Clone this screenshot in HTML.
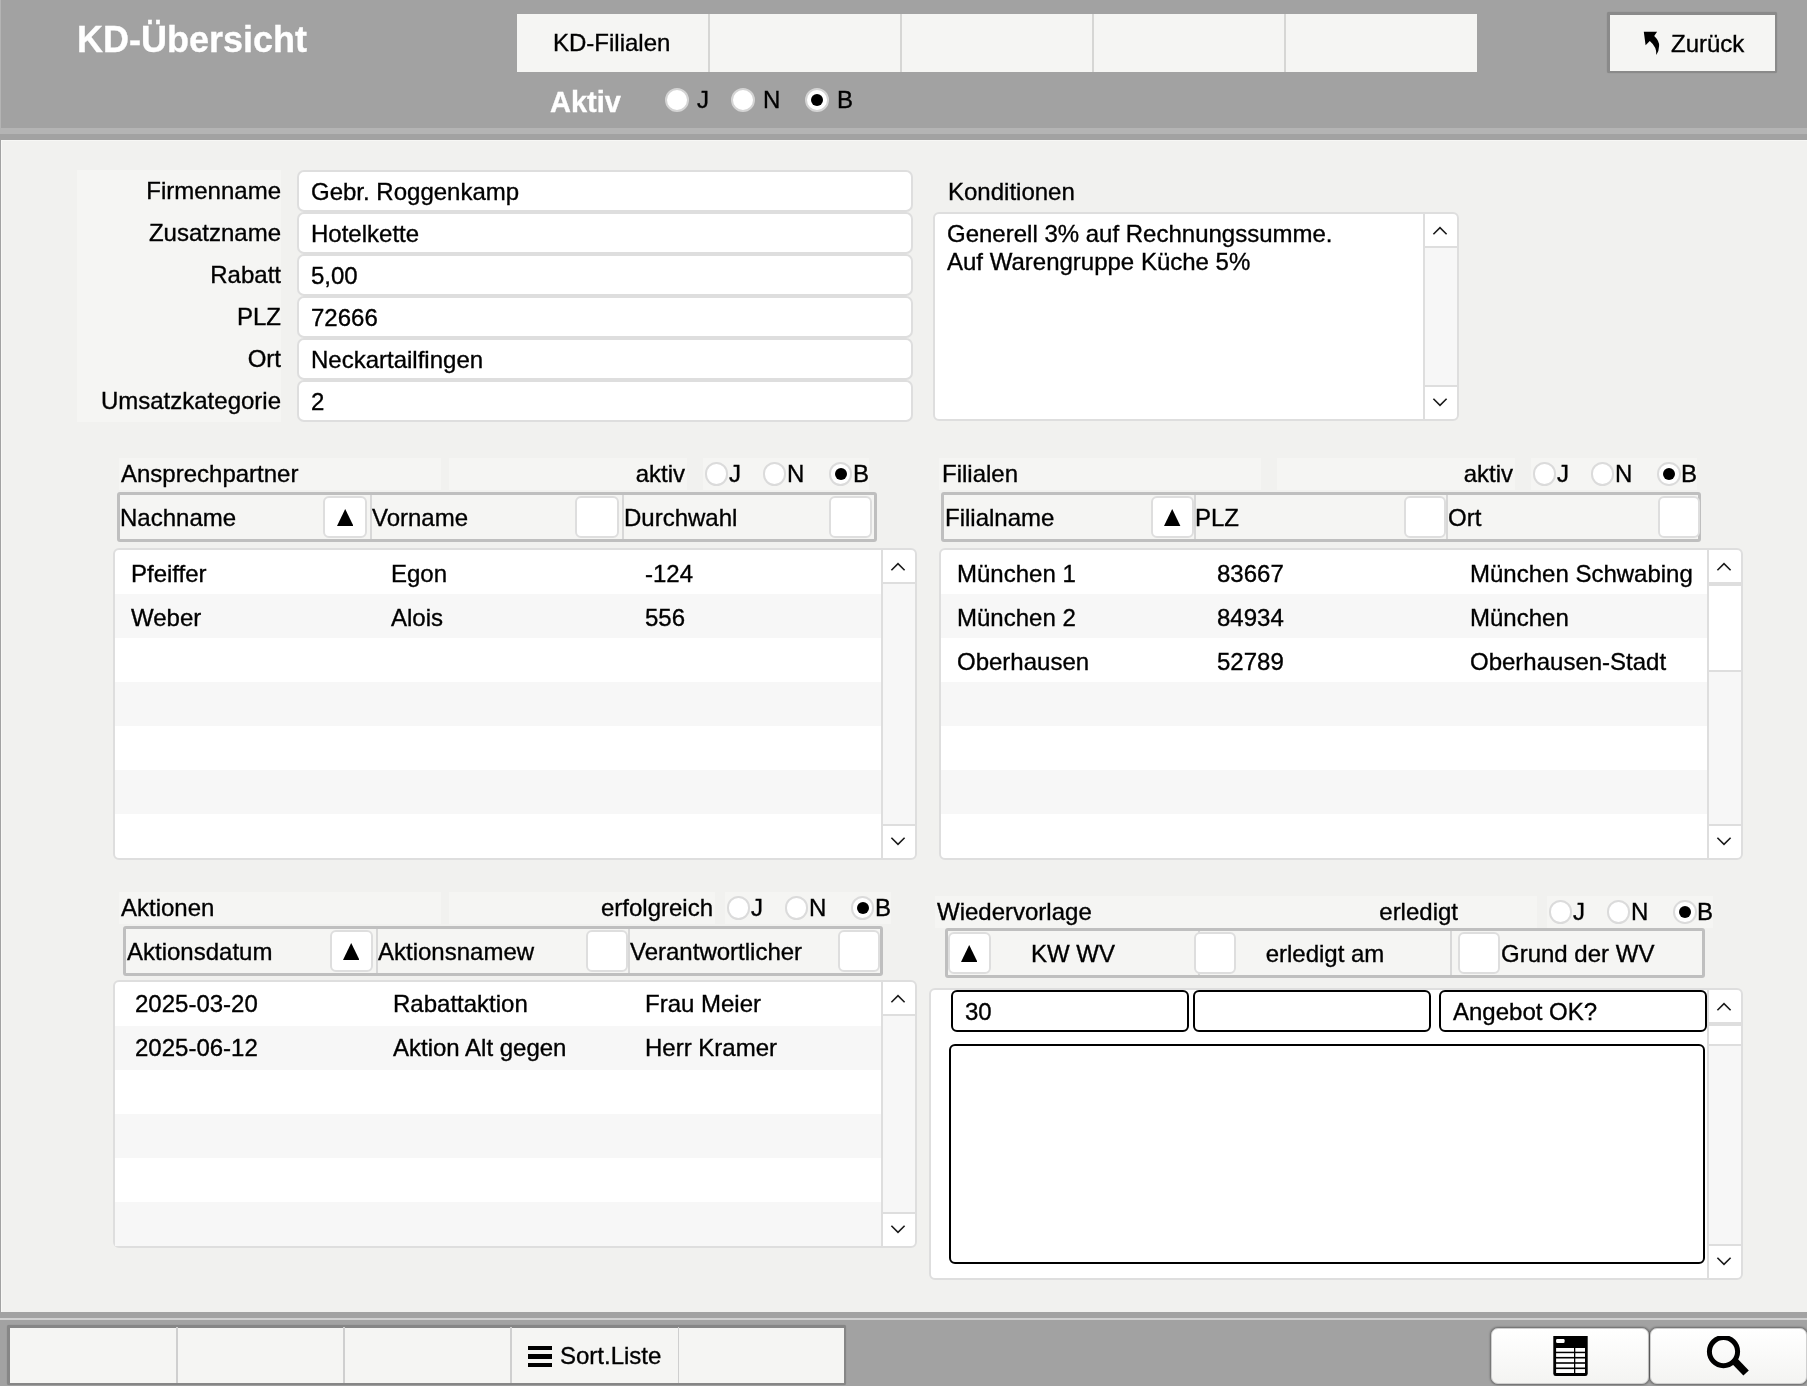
<!DOCTYPE html>
<html lang="de"><head><meta charset="utf-8"><title>KD-Übersicht</title>
<style>
html,body{margin:0;padding:0}
body{width:1807px;height:1386px;background:#a2a2a2;position:relative;overflow:hidden;font-family:"Liberation Sans",sans-serif;}
.a,.t,.inp,.box,.hd,.sb,.rd,.bi,.fb{position:absolute;box-sizing:border-box}
.t{white-space:nowrap;will-change:transform;-webkit-text-stroke:0.35px currentColor}
.inp{background:#fff;border:2px solid #dedede;border-radius:7px}
.box{background:#fff;border:2px solid #dedede;border-radius:6px}
.hd{background:#f5f5f3;border:3px solid #bfbfbf;border-radius:3px}
.sb{background:#fff;border:2px solid #dedede;border-radius:6px}
.rd{background:#fff;border:2px solid #dbdbdb;border-radius:50%}
.rd.on::after{content:"";position:absolute;left:50%;top:50%;width:12.4px;height:12.4px;margin:-6.2px 0 0 -6.2px;border-radius:50%;background:#000}
.rd.big{border:2px solid #d4d4d4}
.rd.big.on::after{width:12px;height:12px;margin:-6px 0 0 -6px}
.bi{background:#fff;border:2px solid #000;border-radius:6px}
.fb{background:linear-gradient(#fff,#f4f4f2);border:1.5px solid #cfcfcf;border-radius:7px;box-shadow:0 0 2px 1px rgba(0,0,0,.35)}
</style></head>
<body>
<div class="a" style="left:0px;top:0px;width:1px;height:128px;background:#b4b4b4"></div>
<div class="a" style="left:0px;top:128px;width:1807px;height:6px;background:#b4b4b4"></div>
<div class="a" style="left:1px;top:140px;width:1806px;height:1172px;background:#f1f1ef;box-shadow:inset 1px 1px 0 #f7f7f5"></div>
<div class="a" style="left:0px;top:1318px;width:1807px;height:2px;background:#d0d0d0"></div>
<div class="t" style="top:19.50px;font-size:36px;line-height:40px;color:#fff;font-weight:bold;left:76.5px;">KD-Übersicht</div>
<div class="a" style="left:517px;top:14px;width:192px;height:58px;background:#f5f5f3"></div>
<div class="a" style="left:709px;top:14px;width:192px;height:58px;background:#f5f5f3"></div>
<div class="a" style="left:708.2px;top:14px;width:1.6px;height:58px;background:#d6d6d4"></div>
<div class="a" style="left:901px;top:14px;width:192px;height:58px;background:#f5f5f3"></div>
<div class="a" style="left:900.2px;top:14px;width:1.6px;height:58px;background:#d6d6d4"></div>
<div class="a" style="left:1093px;top:14px;width:192px;height:58px;background:#f5f5f3"></div>
<div class="a" style="left:1092.2px;top:14px;width:1.6px;height:58px;background:#d6d6d4"></div>
<div class="a" style="left:1285px;top:14px;width:192px;height:58px;background:#f5f5f3"></div>
<div class="a" style="left:1284.2px;top:14px;width:1.6px;height:58px;background:#d6d6d4"></div>
<div class="t" style="top:29.00px;font-size:24px;line-height:27px;color:#000;left:553px;">KD-Filialen</div>
<div class="t" style="top:85.50px;font-size:29px;line-height:33px;color:#fff;font-weight:bold;left:550px;">Aktiv</div>
<div class="rd big" style="left:664.8px;top:88.0px;width:24px;height:24px;"></div>
<div class="t" style="top:86.00px;font-size:24px;line-height:27px;color:#000;left:696.5px;">J</div>
<div class="rd big" style="left:730.8px;top:88.0px;width:24px;height:24px;"></div>
<div class="t" style="top:86.00px;font-size:24px;line-height:27px;color:#000;left:762.5px;">N</div>
<div class="rd big on" style="left:804.7px;top:88.0px;width:24px;height:24px;"></div>
<div class="t" style="top:86.00px;font-size:24px;line-height:27px;color:#000;left:836.5px;">B</div>
<div class="a" style="left:1607.2px;top:12px;width:169.7px;height:61.2px;background:#f5f5f3;border:3px solid #8a8a8a;border-right-width:2px;border-bottom-width:2px;box-sizing:border-box;border-radius:2px;box-shadow:0 0 1px rgba(0,0,0,.2)"></div>
<svg class="a" style="left:1640px;top:28px" width="24" height="30" viewBox="1640 28 24 30"><path d="M1643.8,31.8 L1657.1,31.8 L1654.2,35.9 Q1659.5,41 1659.1,46 Q1659,51 1656.3,55.1 Q1657,47 1649.8,40.9 L1645.6,45.3 Z" fill="#000"/></svg>
<div class="t" style="top:30.40px;font-size:24px;line-height:27px;color:#000;left:1671.4px;">Zurück</div>
<div class="a" style="left:77px;top:170px;width:204px;height:252px;background:#f5f5f3"></div>
<div class="t" style="top:177.00px;font-size:24px;line-height:27px;color:#000;left:-319px;width:600px;text-align:right;">Firmenname</div>
<div class="inp" style="left:297px;top:170px;width:616px;height:42px;"></div>
<div class="t" style="top:178.00px;font-size:24px;line-height:27px;color:#000;left:311px;">Gebr. Roggenkamp</div>
<div class="t" style="top:219.00px;font-size:24px;line-height:27px;color:#000;left:-319px;width:600px;text-align:right;">Zusatzname</div>
<div class="inp" style="left:297px;top:212px;width:616px;height:42px;"></div>
<div class="t" style="top:220.00px;font-size:24px;line-height:27px;color:#000;left:311px;">Hotelkette</div>
<div class="t" style="top:261.00px;font-size:24px;line-height:27px;color:#000;left:-319px;width:600px;text-align:right;">Rabatt</div>
<div class="inp" style="left:297px;top:254px;width:616px;height:42px;"></div>
<div class="t" style="top:262.00px;font-size:24px;line-height:27px;color:#000;left:311px;">5,00</div>
<div class="t" style="top:303.00px;font-size:24px;line-height:27px;color:#000;left:-319px;width:600px;text-align:right;">PLZ</div>
<div class="inp" style="left:297px;top:296px;width:616px;height:42px;"></div>
<div class="t" style="top:304.00px;font-size:24px;line-height:27px;color:#000;left:311px;">72666</div>
<div class="t" style="top:345.00px;font-size:24px;line-height:27px;color:#000;left:-319px;width:600px;text-align:right;">Ort</div>
<div class="inp" style="left:297px;top:338px;width:616px;height:42px;"></div>
<div class="t" style="top:346.00px;font-size:24px;line-height:27px;color:#000;left:311px;">Neckartailfingen</div>
<div class="t" style="top:387.00px;font-size:24px;line-height:27px;color:#000;left:-319px;width:600px;text-align:right;">Umsatzkategorie</div>
<div class="inp" style="left:297px;top:380px;width:616px;height:42px;"></div>
<div class="t" style="top:388.00px;font-size:24px;line-height:27px;color:#000;left:311px;">2</div>
<div class="t" style="top:178.00px;font-size:24px;line-height:27px;color:#000;left:948px;">Konditionen</div>
<div class="box" style="left:933px;top:212px;width:526px;height:209px;"></div>
<div class="a" style="left:1423px;top:214px;width:2px;height:205px;background:#dedede"></div>
<div class="a" style="left:1425px;top:248px;width:32px;height:137px;background:#f7f7f7"></div>
<div class="a" style="left:1425px;top:246px;width:32px;height:2px;background:#dedede"></div>
<div class="a" style="left:1425px;top:385px;width:32px;height:2px;background:#dedede"></div>
<svg class="a" style="left:1431.10px;top:225.10px" width="18" height="12" viewBox="0 0 18 12"><polyline points="2.4,9.3 9,2.7 15.6,9.3" fill="none" stroke="#1a1a1a" stroke-width="1.6"/></svg>
<svg class="a" style="left:1431.10px;top:396.00px" width="18" height="12" viewBox="0 0 18 12"><polyline points="2.4,2.7 9,9.3 15.6,2.7" fill="none" stroke="#1a1a1a" stroke-width="1.6"/></svg>
<div class="t" style="top:220.00px;font-size:24px;line-height:27px;color:#000;left:947px;">Generell 3% auf Rechnungssumme.</div>
<div class="t" style="top:248.00px;font-size:24px;line-height:27px;color:#000;left:947px;">Auf Warengruppe Küche 5%</div>
<div class="a" style="left:119px;top:458px;width:322px;height:32px;background:#f5f5f3"></div>
<div class="a" style="left:449px;top:458px;width:238px;height:32px;background:#f5f5f3"></div>
<div class="a" style="left:703px;top:458px;width:166px;height:32px;background:#f5f5f3"></div>
<div class="t" style="top:460.00px;font-size:24px;line-height:27px;color:#000;left:121px;">Ansprechpartner</div>
<div class="t" style="top:460.00px;font-size:24px;line-height:27px;color:#000;left:84.70000000000005px;width:600px;text-align:right;">aktiv</div>
<div class="rd" style="left:704.9px;top:462.2px;width:23.4px;height:23.4px;"></div>
<div class="t" style="top:460.00px;font-size:24px;line-height:27px;color:#000;left:729.2px;">J</div>
<div class="rd" style="left:763.1px;top:462.2px;width:23.4px;height:23.4px;"></div>
<div class="t" style="top:460.00px;font-size:24px;line-height:27px;color:#000;left:786.9px;">N</div>
<div class="rd on" style="left:829.1px;top:462.2px;width:23.4px;height:23.4px;"></div>
<div class="t" style="top:460.00px;font-size:24px;line-height:27px;color:#000;left:852.8px;">B</div>
<div class="hd" style="left:117px;top:492px;width:760px;height:50px;"></div>
<div class="a" style="left:370px;top:495px;width:2px;height:44px;background:#d8d8d8"></div>
<div class="a" style="left:622px;top:495px;width:2px;height:44px;background:#d8d8d8"></div>
<div class="sb" style="left:323px;top:496px;width:44px;height:42px;"></div>
<svg class="a" style="left:336.80px;top:509px" width="16.4" height="16.9" viewBox="0 0 16.4 16.9"><polygon points="0,16.9 8.2,0 16.4,16.9" fill="#000"/></svg>
<div class="sb" style="left:575px;top:496px;width:44px;height:42px;"></div>
<div class="sb" style="left:829px;top:496px;width:43px;height:42px;"></div>
<div class="t" style="top:504.00px;font-size:24px;line-height:27px;color:#000;left:120px;">Nachname</div>
<div class="t" style="top:504.00px;font-size:24px;line-height:27px;color:#000;left:372.4px;">Vorname</div>
<div class="t" style="top:504.00px;font-size:24px;line-height:27px;color:#000;left:624.4px;">Durchwahl</div>
<div class="box" style="left:113.3px;top:548px;width:803.7px;height:312px;"></div>
<div class="a" style="left:115.3px;top:594px;width:765.7px;height:44px;background:#f7f7f7"></div>
<div class="a" style="left:115.3px;top:682px;width:765.7px;height:44px;background:#f7f7f7"></div>
<div class="a" style="left:115.3px;top:770px;width:765.7px;height:44px;background:#f7f7f7"></div>
<div class="a" style="left:881px;top:550px;width:2px;height:308px;background:#dedede"></div>
<div class="a" style="left:883px;top:584px;width:32px;height:240px;background:#f7f7f7"></div>
<div class="a" style="left:883px;top:582px;width:32px;height:2px;background:#dedede"></div>
<div class="a" style="left:883px;top:824px;width:32px;height:2px;background:#dedede"></div>
<svg class="a" style="left:889.10px;top:561.10px" width="18" height="12" viewBox="0 0 18 12"><polyline points="2.4,9.3 9,2.7 15.6,9.3" fill="none" stroke="#1a1a1a" stroke-width="1.6"/></svg>
<svg class="a" style="left:889.10px;top:835.00px" width="18" height="12" viewBox="0 0 18 12"><polyline points="2.4,2.7 9,9.3 15.6,2.7" fill="none" stroke="#1a1a1a" stroke-width="1.6"/></svg>
<div class="t" style="top:560.00px;font-size:24px;line-height:27px;color:#000;left:131px;">Pfeiffer</div>
<div class="t" style="top:560.00px;font-size:24px;line-height:27px;color:#000;left:391px;">Egon</div>
<div class="t" style="top:560.00px;font-size:24px;line-height:27px;color:#000;left:645px;">-124</div>
<div class="t" style="top:604.00px;font-size:24px;line-height:27px;color:#000;left:131px;">Weber</div>
<div class="t" style="top:604.00px;font-size:24px;line-height:27px;color:#000;left:391px;">Alois</div>
<div class="t" style="top:604.00px;font-size:24px;line-height:27px;color:#000;left:645px;">556</div>
<div class="a" style="left:939px;top:458px;width:322px;height:32px;background:#f5f5f3"></div>
<div class="a" style="left:1277px;top:458px;width:238px;height:32px;background:#f5f5f3"></div>
<div class="a" style="left:1531px;top:458px;width:166px;height:32px;background:#f5f5f3"></div>
<div class="t" style="top:460.00px;font-size:24px;line-height:27px;color:#000;left:942px;">Filialen</div>
<div class="t" style="top:460.00px;font-size:24px;line-height:27px;color:#000;left:913px;width:600px;text-align:right;">aktiv</div>
<div class="rd" style="left:1533.0px;top:462.2px;width:23.4px;height:23.4px;"></div>
<div class="t" style="top:460.00px;font-size:24px;line-height:27px;color:#000;left:1557.4px;">J</div>
<div class="rd" style="left:1591.0px;top:462.2px;width:23.4px;height:23.4px;"></div>
<div class="t" style="top:460.00px;font-size:24px;line-height:27px;color:#000;left:1615.1000000000001px;">N</div>
<div class="rd on" style="left:1657.4px;top:462.2px;width:23.4px;height:23.4px;"></div>
<div class="t" style="top:460.00px;font-size:24px;line-height:27px;color:#000;left:1680.7px;">B</div>
<div class="hd" style="left:941px;top:492px;width:760px;height:50px;"></div>
<div class="a" style="left:1194px;top:495px;width:2px;height:44px;background:#d8d8d8"></div>
<div class="a" style="left:1446px;top:495px;width:2px;height:44px;background:#d8d8d8"></div>
<div class="sb" style="left:1151px;top:496px;width:43px;height:42px;"></div>
<svg class="a" style="left:1164.30px;top:509px" width="16.4" height="16.9" viewBox="0 0 16.4 16.9"><polygon points="0,16.9 8.2,0 16.4,16.9" fill="#000"/></svg>
<div class="sb" style="left:1403.5px;top:496px;width:42.5px;height:42px;"></div>
<div class="sb" style="left:1657.5px;top:496px;width:42.5px;height:42px;"></div>
<div class="t" style="top:504.00px;font-size:24px;line-height:27px;color:#000;left:945px;">Filialname</div>
<div class="t" style="top:504.00px;font-size:24px;line-height:27px;color:#000;left:1195.2px;">PLZ</div>
<div class="t" style="top:504.00px;font-size:24px;line-height:27px;color:#000;left:1448.4px;">Ort</div>
<div class="box" style="left:939.3px;top:548px;width:803.7px;height:312px;"></div>
<div class="a" style="left:941.3px;top:594px;width:765.7px;height:44px;background:#f7f7f7"></div>
<div class="a" style="left:941.3px;top:682px;width:765.7px;height:44px;background:#f7f7f7"></div>
<div class="a" style="left:941.3px;top:770px;width:765.7px;height:44px;background:#f7f7f7"></div>
<div class="a" style="left:1707px;top:550px;width:2px;height:308px;background:#dedede"></div>
<div class="a" style="left:1709px;top:584px;width:32px;height:240px;background:#f7f7f7"></div>
<div class="a" style="left:1709px;top:582px;width:32px;height:2px;background:#dedede"></div>
<div class="a" style="left:1709px;top:824px;width:32px;height:2px;background:#dedede"></div>
<div class="a" style="left:1709px;top:584px;width:32px;height:2px;background:#dedede"></div>
<div class="a" style="left:1709px;top:586px;width:32px;height:84px;background:#fff"></div>
<div class="a" style="left:1709px;top:670px;width:32px;height:2px;background:#dedede"></div>
<svg class="a" style="left:1715.10px;top:561.10px" width="18" height="12" viewBox="0 0 18 12"><polyline points="2.4,9.3 9,2.7 15.6,9.3" fill="none" stroke="#1a1a1a" stroke-width="1.6"/></svg>
<svg class="a" style="left:1715.10px;top:835.00px" width="18" height="12" viewBox="0 0 18 12"><polyline points="2.4,2.7 9,9.3 15.6,2.7" fill="none" stroke="#1a1a1a" stroke-width="1.6"/></svg>
<div class="t" style="top:560.00px;font-size:24px;line-height:27px;color:#000;left:956.5px;">München 1</div>
<div class="t" style="top:560.00px;font-size:24px;line-height:27px;color:#000;left:1217px;">83667</div>
<div class="t" style="top:560.00px;font-size:24px;line-height:27px;color:#000;left:1470px;">München Schwabing</div>
<div class="t" style="top:604.00px;font-size:24px;line-height:27px;color:#000;left:956.5px;">München 2</div>
<div class="t" style="top:604.00px;font-size:24px;line-height:27px;color:#000;left:1217px;">84934</div>
<div class="t" style="top:604.00px;font-size:24px;line-height:27px;color:#000;left:1470px;">München</div>
<div class="t" style="top:648.00px;font-size:24px;line-height:27px;color:#000;left:956.5px;">Oberhausen</div>
<div class="t" style="top:648.00px;font-size:24px;line-height:27px;color:#000;left:1217px;">52789</div>
<div class="t" style="top:648.00px;font-size:24px;line-height:27px;color:#000;left:1470px;">Oberhausen-Stadt</div>
<div class="a" style="left:119px;top:892px;width:322px;height:32px;background:#f5f5f3"></div>
<div class="a" style="left:449px;top:892px;width:266px;height:32px;background:#f5f5f3"></div>
<div class="a" style="left:725px;top:892px;width:166px;height:32px;background:#f5f5f3"></div>
<div class="t" style="top:894.00px;font-size:24px;line-height:27px;color:#000;left:121px;">Aktionen</div>
<div class="t" style="top:894.00px;font-size:24px;line-height:27px;color:#000;left:113px;width:600px;text-align:right;">erfolgreich</div>
<div class="rd" style="left:726.6px;top:896.1999999999999px;width:23.4px;height:23.4px;"></div>
<div class="t" style="top:894.00px;font-size:24px;line-height:27px;color:#000;left:751.2px;">J</div>
<div class="rd" style="left:784.8px;top:896.1999999999999px;width:23.4px;height:23.4px;"></div>
<div class="t" style="top:894.00px;font-size:24px;line-height:27px;color:#000;left:808.9px;">N</div>
<div class="rd on" style="left:851.0px;top:896.1999999999999px;width:23.4px;height:23.4px;"></div>
<div class="t" style="top:894.00px;font-size:24px;line-height:27px;color:#000;left:875.0px;">B</div>
<div class="hd" style="left:123px;top:926px;width:760px;height:50px;"></div>
<div class="a" style="left:376px;top:929px;width:2px;height:44px;background:#d8d8d8"></div>
<div class="a" style="left:628px;top:929px;width:2px;height:44px;background:#d8d8d8"></div>
<div class="sb" style="left:329.5px;top:930px;width:43px;height:42px;"></div>
<svg class="a" style="left:342.80px;top:943px" width="16.4" height="16.9" viewBox="0 0 16.4 16.9"><polygon points="0,16.9 8.2,0 16.4,16.9" fill="#000"/></svg>
<div class="sb" style="left:585.5px;top:930px;width:42.5px;height:42px;"></div>
<div class="sb" style="left:837.5px;top:930px;width:42.5px;height:42px;"></div>
<div class="t" style="top:938.00px;font-size:24px;line-height:27px;color:#000;left:126.5px;">Aktionsdatum</div>
<div class="t" style="top:938.00px;font-size:24px;line-height:27px;color:#000;left:378px;">Aktionsnamew</div>
<div class="t" style="top:938.00px;font-size:24px;line-height:27px;color:#000;left:629.6px;">Verantwortlicher</div>
<div class="box" style="left:113.3px;top:980px;width:803.7px;height:268px;"></div>
<div class="a" style="left:115.3px;top:1026px;width:765.7px;height:44px;background:#f7f7f7"></div>
<div class="a" style="left:115.3px;top:1114px;width:765.7px;height:44px;background:#f7f7f7"></div>
<div class="a" style="left:115.3px;top:1202px;width:765.7px;height:44px;background:#f7f7f7"></div>
<div class="a" style="left:881px;top:982px;width:2px;height:264px;background:#dedede"></div>
<div class="a" style="left:883px;top:1016px;width:32px;height:196px;background:#f7f7f7"></div>
<div class="a" style="left:883px;top:1014px;width:32px;height:2px;background:#dedede"></div>
<div class="a" style="left:883px;top:1212px;width:32px;height:2px;background:#dedede"></div>
<svg class="a" style="left:889.10px;top:993.10px" width="18" height="12" viewBox="0 0 18 12"><polyline points="2.4,9.3 9,2.7 15.6,9.3" fill="none" stroke="#1a1a1a" stroke-width="1.6"/></svg>
<svg class="a" style="left:889.10px;top:1223.00px" width="18" height="12" viewBox="0 0 18 12"><polyline points="2.4,2.7 9,9.3 15.6,2.7" fill="none" stroke="#1a1a1a" stroke-width="1.6"/></svg>
<div class="t" style="top:990.00px;font-size:24px;line-height:27px;color:#000;left:135px;">2025-03-20</div>
<div class="t" style="top:990.00px;font-size:24px;line-height:27px;color:#000;left:393px;">Rabattaktion</div>
<div class="t" style="top:990.00px;font-size:24px;line-height:27px;color:#000;left:645px;">Frau Meier</div>
<div class="t" style="top:1034.00px;font-size:24px;line-height:27px;color:#000;left:135px;">2025-06-12</div>
<div class="t" style="top:1034.00px;font-size:24px;line-height:27px;color:#000;left:393px;">Aktion Alt gegen</div>
<div class="t" style="top:1034.00px;font-size:24px;line-height:27px;color:#000;left:645px;">Herr Kramer</div>
<div class="a" style="left:935px;top:896px;width:363px;height:32px;background:#f5f5f3"></div>
<div class="a" style="left:1298px;top:896px;width:239px;height:32px;background:#f5f5f3"></div>
<div class="a" style="left:1547px;top:896px;width:166px;height:32px;background:#f5f5f3"></div>
<div class="t" style="top:898.00px;font-size:24px;line-height:27px;color:#000;left:937px;">Wiedervorlage</div>
<div class="t" style="top:898.00px;font-size:24px;line-height:27px;color:#000;left:857.5px;width:600px;text-align:right;">erledigt</div>
<div class="rd" style="left:1548.9px;top:900.1999999999999px;width:23.4px;height:23.4px;"></div>
<div class="t" style="top:898.00px;font-size:24px;line-height:27px;color:#000;left:1572.9px;">J</div>
<div class="rd" style="left:1607.1px;top:900.1999999999999px;width:23.4px;height:23.4px;"></div>
<div class="t" style="top:898.00px;font-size:24px;line-height:27px;color:#000;left:1631.3000000000002px;">N</div>
<div class="rd on" style="left:1673.3px;top:900.1999999999999px;width:23.4px;height:23.4px;"></div>
<div class="t" style="top:898.00px;font-size:24px;line-height:27px;color:#000;left:1696.6px;">B</div>
<div class="hd" style="left:945px;top:928px;width:760px;height:50px;"></div>
<div class="a" style="left:1197.5px;top:931px;width:2px;height:44px;background:#d8d8d8"></div>
<div class="a" style="left:1450px;top:931px;width:2px;height:44px;background:#d8d8d8"></div>
<div class="sb" style="left:948px;top:932.3px;width:42.5px;height:41.5px;"></div>
<svg class="a" style="left:960.80px;top:945px" width="16.4" height="16.9" viewBox="0 0 16.4 16.9"><polygon points="0,16.9 8.2,0 16.4,16.9" fill="#000"/></svg>
<div class="sb" style="left:1193.7px;top:932.3px;width:42.5px;height:41.5px;"></div>
<div class="sb" style="left:1457.5px;top:932.3px;width:42.5px;height:41.5px;"></div>
<div class="t" style="top:940.00px;font-size:24px;line-height:27px;color:#000;left:773.4000000000001px;width:600px;text-align:center;">KW WV</div>
<div class="t" style="top:940.00px;font-size:24px;line-height:27px;color:#000;left:1025px;width:600px;text-align:center;">erledigt am</div>
<div class="t" style="top:940.00px;font-size:24px;line-height:27px;color:#000;left:1501px;">Grund der WV</div>
<div class="box" style="left:929.3px;top:988px;width:813.7px;height:292px;"></div>
<div class="a" style="left:1707px;top:990px;width:2px;height:288px;background:#dedede"></div>
<div class="a" style="left:1709px;top:1024px;width:32px;height:220px;background:#f7f7f7"></div>
<div class="a" style="left:1709px;top:1022px;width:32px;height:2px;background:#dedede"></div>
<div class="a" style="left:1709px;top:1244px;width:32px;height:2px;background:#dedede"></div>
<div class="a" style="left:1709px;top:1024px;width:32px;height:2px;background:#dedede"></div>
<div class="a" style="left:1709px;top:1026px;width:32px;height:18px;background:#fff"></div>
<div class="a" style="left:1709px;top:1044px;width:32px;height:2px;background:#dedede"></div>
<svg class="a" style="left:1715.10px;top:1001.10px" width="18" height="12" viewBox="0 0 18 12"><polyline points="2.4,9.3 9,2.7 15.6,9.3" fill="none" stroke="#1a1a1a" stroke-width="1.6"/></svg>
<svg class="a" style="left:1715.10px;top:1255.00px" width="18" height="12" viewBox="0 0 18 12"><polyline points="2.4,2.7 9,9.3 15.6,2.7" fill="none" stroke="#1a1a1a" stroke-width="1.6"/></svg>
<div class="bi" style="left:951px;top:990px;width:238px;height:42px;"></div>
<div class="t" style="top:998.00px;font-size:24px;line-height:27px;color:#000;left:965px;">30</div>
<div class="bi" style="left:1193px;top:990px;width:238px;height:42px;"></div>
<div class="bi" style="left:1439px;top:990px;width:268px;height:42px;"></div>
<div class="t" style="top:998.00px;font-size:24px;line-height:27px;color:#000;left:1453px;">Angebot OK?</div>
<div class="bi" style="left:949px;top:1044px;width:756.3px;height:220px;"></div>
<div class="a" style="left:7.3px;top:1324.6px;width:838.9px;height:60.8px;background:#f5f5f3;border:3px solid #868686;border-right-width:2px;border-bottom-width:2px;box-sizing:border-box;border-radius:2px;box-shadow:0 0 1px rgba(0,0,0,.2)"></div>
<div class="a" style="left:176px;top:1327px;width:1.6px;height:56px;background:#cfcfcf"></div>
<div class="a" style="left:343.3px;top:1327px;width:1.6px;height:56px;background:#cfcfcf"></div>
<div class="a" style="left:510.3px;top:1327px;width:1.6px;height:56px;background:#cfcfcf"></div>
<div class="a" style="left:677.5px;top:1327px;width:1.6px;height:56px;background:#cfcfcf"></div>
<div class="a" style="left:528px;top:1345.6px;width:24px;height:4.4px;background:#000"></div>
<div class="a" style="left:528px;top:1353.7px;width:24px;height:5px;background:#000"></div>
<div class="a" style="left:528px;top:1362.5px;width:24px;height:4.5px;background:#000"></div>
<div class="t" style="top:1342.00px;font-size:24px;line-height:27px;color:#000;left:560px;">Sort.Liste</div>
<div class="fb" style="left:1491px;top:1327.5px;width:158px;height:56.5px;"></div>
<div class="fb" style="left:1650px;top:1327.5px;width:157px;height:56.5px;"></div>
<svg class="a" style="left:1553px;top:1336px" width="35" height="40" viewBox="0 0 34.4 40">
<path d="M0,0H34.4V37.5Q34.4,40 32,40H2.4Q0,40 0,37.5Z" fill="#000"/>
<rect x="2.8" y="3.1" width="8.5" height="3.9" rx="1.2" fill="#fff"/>
<g fill="#fff">
<rect x="2.8" y="12" width="17.9" height="3.7"/><rect x="22" y="12" width="9.7" height="3.7"/>
<rect x="2.8" y="17.2" width="17.9" height="3.7"/><rect x="22" y="17.2" width="9.7" height="3.7"/>
<rect x="2.8" y="22.5" width="17.9" height="3.7"/><rect x="22" y="22.5" width="9.7" height="3.7"/>
<rect x="2.8" y="27.8" width="17.9" height="3.7"/><rect x="22" y="27.8" width="9.7" height="3.7"/>
<rect x="2.8" y="33.1" width="17.9" height="3.9"/><rect x="22" y="33.1" width="9.7" height="3.9"/>
</g></svg>
<svg class="a" style="left:1700px;top:1335.8px" width="60" height="44.2" viewBox="1700 1335.8 60 44.2">
<circle cx="1723.5" cy="1351.4" r="14.1" fill="none" stroke="#000" stroke-width="5"/>
<line x1="1733" y1="1359.2" x2="1746.1" y2="1372.8" stroke="#000" stroke-width="7.5"/>
</svg>
</body></html>
